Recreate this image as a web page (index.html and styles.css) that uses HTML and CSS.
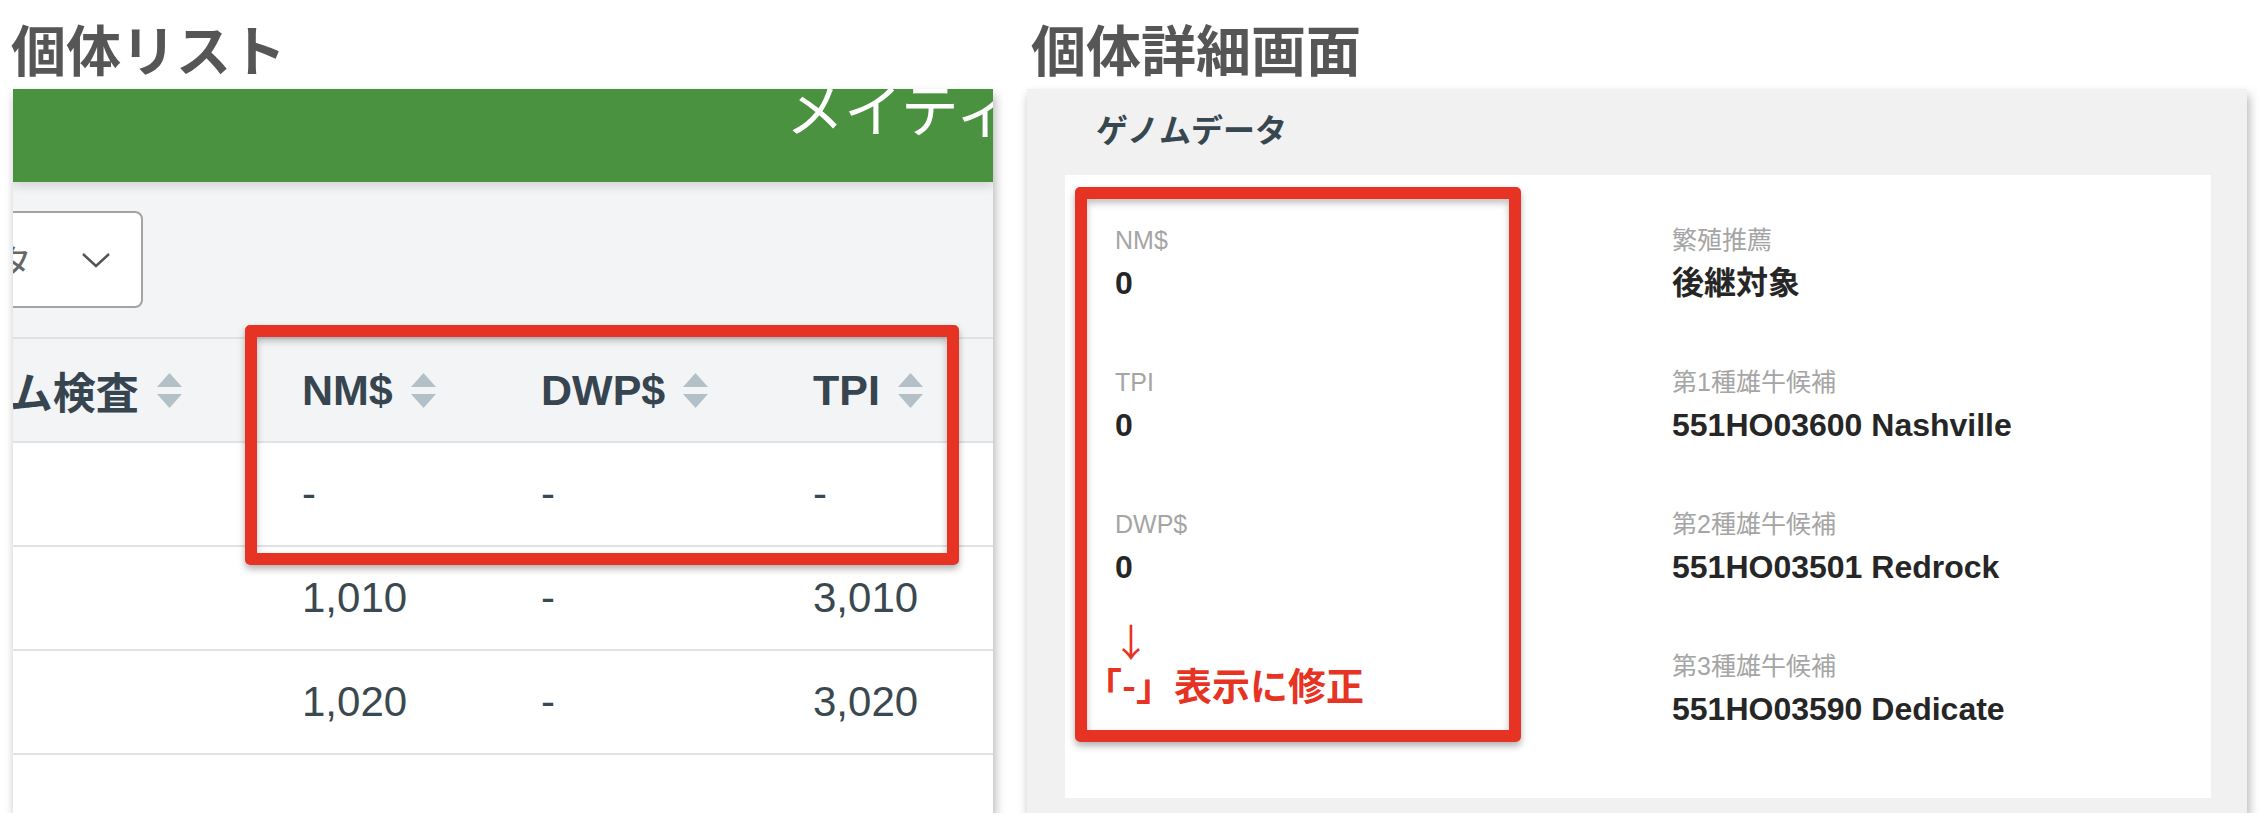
FILE: index.html
```html
<!DOCTYPE html>
<html lang="ja">
<head>
    <meta charset="UTF-8">
    <meta name="viewport" content="width=device-width, initial-scale=1.0">
    <title>個体リスト / 個体詳細画面</title>
    <link rel="stylesheet" href="styles.css">
</head>
<body>
    <div class="page">
        <!-- 個体リスト -->
        <section class="col-list">
            <h1 class="page-title title-list">個体リスト</h1>
            <div class="panel list-panel">
                <div class="appbar"><span class="appbar-title">メイティングリスト</span></div>
                <div class="toolbar">
                    <div class="select">
                        <span>データ</span>
                        <svg class="chevron" width="30" height="16" viewBox="0 0 30 16"><polyline points="2,2 15,14 28,2" fill="none" stroke="#555" stroke-width="2.5"/></svg>
                    </div>
                </div>
                <table class="grid">
                    <colgroup>
                        <col class="c1"><col class="c2"><col class="c3"><col class="c4">
                    </colgroup>
                    <thead>
                        <tr>
                            <th><span class="th-in">ゲノム検査<svg class="sort" width="25" height="35" viewBox="0 0 25 35"><polygon points="12.5,0 25,14 0,14"/><polygon points="0,21 25,21 12.5,35"/></svg></span></th>
                            <th><span class="th-in">NM$<svg class="sort" width="25" height="35" viewBox="0 0 25 35"><polygon points="12.5,0 25,14 0,14"/><polygon points="0,21 25,21 12.5,35"/></svg></span></th>
                            <th><span class="th-in">DWP$<svg class="sort" width="25" height="35" viewBox="0 0 25 35"><polygon points="12.5,0 25,14 0,14"/><polygon points="0,21 25,21 12.5,35"/></svg></span></th>
                            <th><span class="th-in">TPI<svg class="sort" width="25" height="35" viewBox="0 0 25 35"><polygon points="12.5,0 25,14 0,14"/><polygon points="0,21 25,21 12.5,35"/></svg></span></th>
                        </tr>
                    </thead>
                    <tbody>
                        <tr><td></td><td>-</td><td>-</td><td>-</td></tr>
                        <tr><td></td><td>1,010</td><td>-</td><td>3,010</td></tr>
                        <tr><td></td><td>1,020</td><td>-</td><td>3,020</td></tr>
                    </tbody>
                </table>
                <div class="mark mark-list"></div>
            </div>
        </section>

        <!-- 個体詳細画面 -->
        <section class="col-detail">
            <h1 class="page-title title-detail">個体詳細画面</h1>
            <div class="panel detail-panel">
                <h2 class="section-title">ゲノムデータ</h2>
                <div class="card">
                    <div class="fields">
                        <div class="field-col">
                            <div class="field">
                                <div class="label">NM$</div>
                                <div class="value">0</div>
                            </div>
                            <div class="field">
                                <div class="label">TPI</div>
                                <div class="value">0</div>
                            </div>
                            <div class="field">
                                <div class="label">DWP$</div>
                                <div class="value">0</div>
                            </div>
                            <div class="note">
                                <div class="note-arrow">↓</div>
                                <div class="note-text">「-」表示に修正</div>
                            </div>
                        </div>
                        <div class="field-col">
                            <div class="field">
                                <div class="label">繁殖推薦</div>
                                <div class="value">後継対象</div>
                            </div>
                            <div class="field">
                                <div class="label">第1種雄牛候補</div>
                                <div class="value">551HO03600 Nashville</div>
                            </div>
                            <div class="field">
                                <div class="label">第2種雄牛候補</div>
                                <div class="value">551HO03501 Redrock</div>
                            </div>
                            <div class="field">
                                <div class="label">第3種雄牛候補</div>
                                <div class="value">551HO03590 Dedicate</div>
                            </div>
                        </div>
                    </div>
                    <div class="mark mark-detail"></div>
                </div>
            </div>
        </section>
    </div>
</body>
</html>
```

FILE: styles.css
```css
body {
    margin: 0;
    background: #fff;
    font-family: "Liberation Sans", "Noto Sans CJK JP", sans-serif;
    color: #37474f;
}
.page {
    display: flex;
    gap: 34px;
    padding-left: 13px;
}
.col-list {
    width: 980px;
    flex: none;
}
.col-detail {
    width: 1220px;
    flex: none;
}
.page-title {
    margin: 0 0 14px;
    padding-top: 20px;
    height: 55px;
    font: bold 55px/55px "Noto Sans CJK JP", sans-serif;
    color: #565656;
    white-space: nowrap;
}
.title-list {
    margin-left: -2px;
}
.title-detail {
    padding-left: 4px;
}
.panel {
    position: relative;
    height: 724px;
    box-sizing: border-box;
    overflow: hidden;
    box-shadow: 2px 6px 10px rgba(0, 0, 0, 0.3);
}

/* 個体リスト */
.list-panel {
    background: #fff;
}
.appbar {
    position: relative;
    z-index: 1;
    height: 93px;
    background: #4a9240;
    overflow: hidden;
    box-shadow: 0 4px 10px rgba(0, 0, 0, 0.14);
}
.appbar-title {
    display: block;
    padding-left: 773px;
    font: 58px/36px "Noto Sans CJK JP", sans-serif;
    color: #fff;
    white-space: nowrap;
}
.toolbar {
    background: #f3f4f6;
    padding: 29px 0;
}
.select {
    display: flex;
    align-items: center;
    justify-content: space-between;
    width: 250px;
    height: 97px;
    margin-left: -120px;
    padding: 0 30px 0 29px;
    box-sizing: border-box;
    background: #fff;
    border: 2px solid #a3a3a3;
    border-radius: 8px;
    font: 36px/1 "Noto Sans CJK JP", sans-serif;
    color: #666;
}
.grid {
    table-layout: fixed;
    border-collapse: separate;
    border-spacing: 0;
    margin-left: -88px;
    width: 1190px;
}
.c1 { width: 377px; }
.c2 { width: 239px; }
.c3 { width: 272px; }
.c4 { width: 302px; }
.grid th,
.grid td {
    padding: 0;
    text-align: left;
    vertical-align: middle;
    border-bottom: 2px solid #dfe3e6;
    white-space: nowrap;
}
.grid th {
    height: 102px;
    background: #f3f4f6;
    border-top: 2px solid #dfe3e6;
    font-size: 43px;
    font-weight: bold;
    color: #36454f;
}
.grid td {
    height: 102px;
    font-size: 42px;
    color: #3a4850;
}
.th-in {
    display: inline-flex;
    align-items: center;
    gap: 18px;
}
.sort {
    fill: #b4c0c7;
}

/* 赤枠 */
.mark {
    position: absolute;
    border: 12px solid #e63323;
    border-radius: 5px;
    box-sizing: border-box;
    box-shadow: 0 4px 7px rgba(0, 0, 0, 0.3), inset 0 4px 7px rgba(0, 0, 0, 0.25);
    pointer-events: none;
}
.mark-list {
    left: 232px;
    top: 236px;
    width: 714px;
    height: 240px;
}
.mark-detail {
    left: 10px;
    top: 12px;
    width: 446px;
    height: 555px;
}

/* 個体詳細画面 */
.detail-panel {
    display: flex;
    flex-direction: column;
    background: #f1f1f1;
    padding: 0 36px 15px 38px;
}
.section-title {
    margin: 0;
    padding: 23px 0 31px 31px;
    font: bold 32px/32px "Noto Sans CJK JP", sans-serif;
    color: #37474f;
}
.card {
    position: relative;
    flex: 1;
    background: #fff;
    padding: 47px 0 0 50px;
}
.fields {
    display: grid;
    grid-template-columns: 557px 1fr;
}
.field {
    margin-bottom: 61px;
}
.label {
    font-size: 25px;
    line-height: 36px;
    color: #a5a5a5;
    white-space: nowrap;
}
.value {
    margin-top: 5px;
    font-size: 32px;
    line-height: 40px;
    font-weight: bold;
    color: #262626;
    white-space: nowrap;
}
.note {
    margin: -28px 0 0 -31px;
    color: #e63323;
    font-family: "Noto Sans CJK JP", sans-serif;
}
.note-arrow {
    padding-left: 28px;
    font-size: 38px;
    line-height: 40px;
}
.note-text {
    margin-top: 2px;
    font-size: 38px;
    line-height: 44px;
    font-weight: bold;
    white-space: nowrap;
}
```
